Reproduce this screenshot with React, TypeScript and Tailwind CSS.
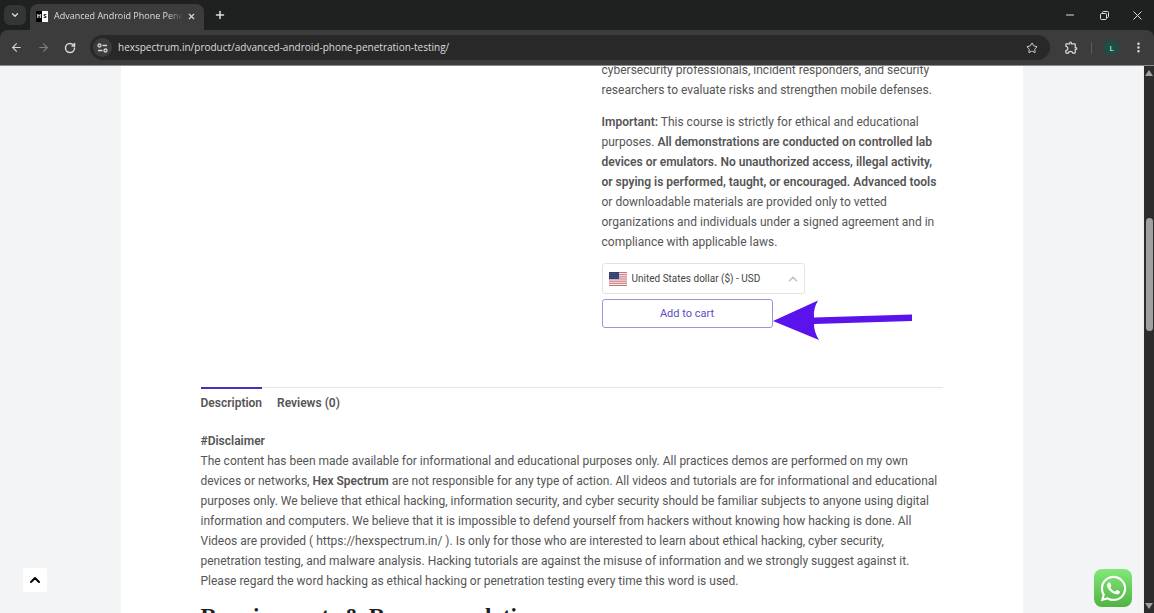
import { ArrowLeft, ArrowRight, ChevronDown, ChevronUp, Minus, Plus, RotateCw, Star, X } from "lucide-react";
import { FaWhatsapp } from "react-icons/fa";
import { MdMoreVert, MdOutlineExtension } from "react-icons/md";

function TabStrip() {
  return (
    <div className="flex h-[30px] items-stretch bg-[#1f2120] text-[#dedede]">
      <button aria-label="Search tabs" className="ml-1 flex h-5 w-[22px] items-center justify-center self-center rounded-md bg-[#343635]">
        <ChevronDown size={10} strokeWidth={3} />
      </button>
      <div className="ml-1 flex h-[26px] w-[174px] items-center self-end rounded-t-lg bg-[#3c3c3c] pr-2 pb-[2px] pl-[6px]">
        <span className="flex h-[11px] w-3 shrink-0 text-[6px] leading-[11px] font-bold" aria-hidden="true">
          <span className="w-1/2 bg-black text-center text-white">H</span>
          <span className="w-1/2 bg-white text-center text-black">S</span>
        </span>
        <span className="ml-[6px] flex-1 overflow-hidden text-[9px] whitespace-nowrap [mask-image:linear-gradient(to_right,black_88%,transparent)]">
          Advanced Android Phone Penetration
        </span>
        <button aria-label="Close tab" className="ml-1">
          <X size={9} strokeWidth={3} />
        </button>
      </div>
      <button aria-label="New tab" className="ml-[10px]">
        <Plus size={12} strokeWidth={3} />
      </button>
      <div className="ml-auto flex items-center gap-6 pr-3">
        <button aria-label="Minimize">
          <Minus size={12} />
        </button>
        <button aria-label="Restore">
          <svg width="9" height="9" viewBox="0 0 9 9" fill="none" stroke="currentColor">
            <rect x="0.5" y="2.5" width="6" height="6" rx="1" />
            <path d="M2.5 2.5V1.5a1 1 0 0 1 1-1h4a1 1 0 0 1 1 1v4a1 1 0 0 1-1 1h-1" />
          </svg>
        </button>
        <button aria-label="Close">
          <svg width="9" height="9" viewBox="0 0 9 9" stroke="currentColor">
            <path d="M0.5 0.5l8 8M8.5 0.5l-8 8" />
          </svg>
        </button>
      </div>
    </div>
  );
}

function Toolbar() {
  return (
    <div className="bg-[#1f2120]">
      <div className="flex h-9 items-center rounded-t-lg border-b border-[#8b8b8b] bg-[#3c3c3c] pr-2 pl-[10px] text-[#d6d6d6]">
        <button aria-label="Back">
          <ArrowLeft size={13} strokeWidth={2} />
        </button>
        <button aria-label="Forward" className="ml-[14px] text-[#7f7f7f]">
          <ArrowRight size={13} strokeWidth={2} />
        </button>
        <button aria-label="Reload" className="ml-[14px]">
          <RotateCw size={12} strokeWidth={3} />
        </button>
        <div className="ml-[14px] flex h-[25px] flex-1 items-center rounded-full bg-[#282828] pr-3 pl-[3px]">
          <button aria-label="View site information" className="flex size-[19px] items-center justify-center rounded-full bg-[#3c3c3c]">
            <svg width="11" height="10" viewBox="0 0 11 10" fill="none" stroke="currentColor" strokeWidth="1.3">
              <circle cx="2.5" cy="2.5" r="1.5" />
              <path d="M5.5 2.5H10M1 7.5h4.5" />
              <circle cx="8.5" cy="7.5" r="1.5" />
            </svg>
          </button>
          <input
            aria-label="Address"
            className="ml-[6px] flex-1 bg-transparent text-[10px] text-[#dcdcdc] outline-none"
            defaultValue="hexspectrum.in/product/advanced-android-phone-penetration-testing/"
          />
          <button aria-label="Bookmark this page">
            <Star size={12} strokeWidth={2} />
          </button>
        </div>
        <button aria-label="Extensions" className="ml-[14px]">
          <MdOutlineExtension size={15} />
        </button>
        <span className="ml-3 h-3 w-px bg-[#5c5c5c]" />
        <button aria-label="Profile" className="ml-3 size-[15px] rounded-full bg-[#1c4e43] text-[8px] leading-[15px] text-white">
          L
        </button>
        <button aria-label="Menu" className="ml-3">
          <MdMoreVert size={15} />
        </button>
      </div>
    </div>
  );
}

function UsFlag() {
  return (
    <svg width="18" height="14" viewBox="0 0 18 14" aria-hidden="true">
      <rect width="18" height="14" fill="#f3e9ea" />
      <path d="M0 .5h18M0 2.7h18M0 4.9h18M0 7h18M0 9.2h18M0 11.3h18M0 13.5h18" stroke="#c9747b" />
      <rect width="10" height="7" fill="#2f3f70" />
      <path d="M1 1.5h8M1 3.5h8M1 5.5h8" stroke="#6f7aa0" strokeWidth=".6" strokeDasharray=".8 1" />
    </svg>
  );
}

function ProductSummary() {
  return (
    <div className="grid grid-cols-2 gap-[60px]">
      <div />
      <div>
        <p>
          cybersecurity professionals, incident responders, and security researchers to evaluate risks and strengthen mobile defenses.
        </p>
        <p className="mt-3">
          <strong className="font-semibold">Important:</strong> This course is strictly for ethical and educational purposes.{" "}
          <strong className="font-semibold">
            All demonstrations are conducted on controlled lab devices or emulators. No unauthorized access, illegal activity, or
            spying is performed, taught, or encouraged. Advanced tools
          </strong>{" "}
          or downloadable materials are provided only to vetted organizations and individuals under a signed agreement and in
          compliance with applicable laws.
        </p>
        <div className="mt-[11px] flex h-[31px] w-[203px] items-center rounded-[3px] border border-[#e3e3e3] px-[6px]">
          <UsFlag />
          <select aria-label="Currency" className="ml-[5px] flex-1 appearance-none bg-transparent text-[10px] text-[#444] outline-none">
            <option>United States dollar ($) - USD</option>
          </select>
          <ChevronUp size={14} strokeWidth={3} className="-mr-[2px] shrink-0 text-[#c4c4c4]" />
        </div>
        <div className="relative mt-[5px] w-[171px]">
          <button className="h-[29px] w-full rounded-[3px] border border-[#9d93dc] text-[11px] text-[#5b4bc4]">Add to cart</button>
          <svg className="absolute top-0 left-full" width="140" height="42" viewBox="0 0 140 42" aria-hidden="true">
            <path d="M0 22L45 1.500Q40 10 41 18.500L139 15.500V22L41 25Q41 33 46 41Z" fill="#5b13ec" />
          </svg>
        </div>
      </div>
    </div>
  );
}

function ProductTabs() {
  return (
    <section className="mt-[59px]">
      <div className="flex gap-[15px] border-t border-[#e5e5e5] font-semibold">
        <button className="-mt-px border-t-2 border-[#4432b8] pt-1">Description</button>
        <button className="pt-[5px]">Reviews (0)</button>
      </div>
      <div className="mt-[18px]">
        <h3 className="font-semibold">#Disclaimer</h3>
        <p>
          The content has been made available for informational and educational purposes only. All practices demos are performed on
          my own devices or networks, <strong className="font-semibold">Hex Spectrum</strong> are not responsible for any type of
          action. All videos and tutorials are for informational and educational purposes only. We believe that ethical hacking,
          information security, and cyber security should be familiar subjects to anyone using digital information and computers. We
          believe that it is impossible to defend yourself from hackers without knowing how hacking is done. All Videos are provided
          ( https://hexspectrum.in/ ). Is only for those who are interested to learn about ethical hacking, cyber security,
          penetration testing, and malware analysis. Hacking tutorials are against the misuse of information and we strongly suggest
          against it. Please regard the word hacking as ethical hacking or penetration testing every time this word is used.
        </p>
        <h2 className="mt-[10px] font-['Liberation_Serif',serif] text-[23px] leading-8 font-bold text-[#1c1c24]">
          Requirements &amp; Recommendations
        </h2>
      </div>
    </section>
  );
}

function Scrollbar() {
  return (
    <div className="flex w-[11px] shrink-0 flex-col items-center border-l border-[#eee] bg-[#2c2c2c] py-1" aria-hidden="true">
      <svg width="8" height="6" viewBox="0 0 8 6" fill="#a0a0a0">
        <path d="M4 0l4 6H0z" />
      </svg>
      <div className="grow-[142]" />
      <div className="w-[7px] grow-[113] rounded-full bg-[#9f9f9f]" />
      <div className="grow-[272]" />
      <svg width="8" height="6" viewBox="0 0 8 6" fill="#a0a0a0">
        <path d="M4 6l4-6H0z" />
      </svg>
    </div>
  );
}

export default function App() {
  return (
    <div className="flex h-screen flex-col overflow-hidden font-['Open_Sans',sans-serif]">
      <TabStrip />
      <Toolbar />
      <div className="flex min-h-0 flex-1">
        <div className="relative min-w-0 flex-1 overflow-hidden bg-[#f3f4f6]">
          <main className="mx-auto min-h-full max-w-[902px] bg-white px-20 font-[Roboto,sans-serif] text-[12px] leading-5 text-[#555]">
            <div className="-mt-[6px]">
              <ProductSummary />
              <ProductTabs />
            </div>
          </main>
          <button aria-label="Back to top" className="absolute bottom-[21px] left-[23px] flex size-6 items-center justify-center rounded-xs bg-white text-black">
            <ChevronUp size={16} strokeWidth={3} />
          </button>
          <a
            href="#whatsapp"
            aria-label="Chat on WhatsApp"
            className="absolute right-[11px] bottom-[6px] flex size-[38px] items-center justify-center rounded-lg bg-linear-to-b from-[#82e878] to-[#4fb443] text-white"
          >
            <FaWhatsapp size={29} />
          </a>
        </div>
        <Scrollbar />
      </div>
    </div>
  );
}
